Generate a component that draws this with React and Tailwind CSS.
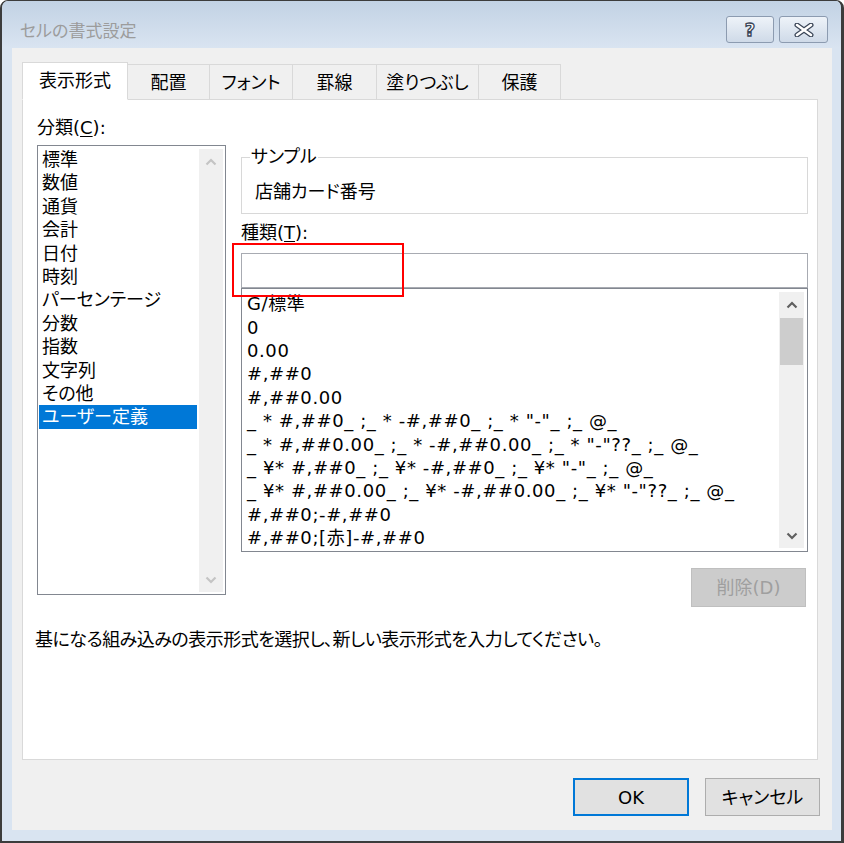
import React from "react";

const F = "font-['DejaVu_Sans','Noto_Sans_CJK_JP',sans-serif] [font-feature-settings:'palt']";

function Up({ color = "#606060" }) {
  return (
    <svg width="12" height="8" viewBox="0 0 12 8">
      <polyline points="1.5,6.5 6,2 10.5,6.5" fill="none" stroke={color} strokeWidth="2.2" />
    </svg>
  );
}
function Down({ color = "#606060" }) {
  return (
    <svg width="12" height="8" viewBox="0 0 12 8">
      <polyline points="1.5,1.5 6,6 10.5,1.5" fill="none" stroke={color} strokeWidth="2.2" />
    </svg>
  );
}

const categories = [
  "標準",
  "数値",
  "通貨",
  "会計",
  "日付",
  "時刻",
  "パーセンテージ",
  "分数",
  "指数",
  "文字列",
  "その他",
  "ユーザー定義",
];

const formats = [
  "G/標準",
  "0",
  "0.00",
  "#,##0",
  "#,##0.00",
  '_ * #,##0_ ;_ * -#,##0_ ;_ * "-"_ ;_ @_',
  '_ * #,##0.00_ ;_ * -#,##0.00_ ;_ * "-"??_ ;_ @_',
  '_ ¥* #,##0_ ;_ ¥* -#,##0_ ;_ ¥* "-"_ ;_ @_',
  '_ ¥* #,##0.00_ ;_ ¥* -#,##0.00_ ;_ ¥* "-"??_ ;_ @_',
  "#,##0;-#,##0",
  "#,##0;[赤]-#,##0",
];

const tabs = [
  { label: "配置", w: "w-[82px]" },
  { label: "フォント", w: "w-[83px]" },
  { label: "罫線", w: "w-[84px]" },
  { label: "塗りつぶし", w: "w-[102px]" },
  { label: "保護", w: "w-[82px]" },
];

export default function App() {
  return (
    <div className={`w-[844px] h-[843px] bg-white text-black text-[18px] ${F}`}>
      <div className="w-[844px] h-[843px] flex flex-col border-l-2 border-t border-r-[3px] border-b-2 border-[#3c3c3c] rounded-t-[8px] bg-[#d9e4f1] overflow-hidden">
        {/* title bar */}
        <div className="h-[47px] flex items-start pt-[15px] pl-[18px] pr-[13px] bg-linear-to-b from-[#c2d2e4] to-[#d9e4f1]">
          <div className="mt-[3px] leading-[24px] text-[17px] text-[#9c9c9c] whitespace-nowrap">セルの書式設定</div>
          <div className="ml-auto flex gap-[5px]">
            <div className="w-[48px] h-[27px] rounded-[3px] border border-[#8c9bb0] bg-linear-to-b from-[#eef3f9] to-[#cfdae8] flex items-center justify-center">
              <span className="font-['DejaVu_Sans',sans-serif] font-bold text-[18px] leading-none text-white [-webkit-text-stroke:1.3px_#3b4658]">?</span>
            </div>
            <div className="w-[49px] h-[27px] rounded-[3px] border border-[#8c9bb0] bg-linear-to-b from-[#eef3f9] to-[#cfdae8] flex items-center justify-center">
              <svg width="20" height="14" viewBox="0 0 20 14">
                <path d="M3 2 L17 12 M17 2 L3 12" stroke="#3b4658" strokeWidth="5" strokeLinecap="round" fill="none" />
                <path d="M3 2 L17 12 M17 2 L3 12" stroke="#ffffff" strokeWidth="2.6" strokeLinecap="round" fill="none" />
              </svg>
            </div>
          </div>
        </div>

        {/* client area */}
        <div className="ml-[10px] mr-[9px] h-[782px] bg-[#f0f0f0] flex flex-col pt-[14px] pl-[10px]">
          {/* tabs */}
          <div className="flex items-end h-[37px]">
            <div className="relative z-10 -mb-px h-[38px] w-[106px] bg-white border border-[#d9d9d9] border-b-white flex items-center justify-center pb-[2px]">
              表示形式
            </div>
            {tabs.map((t) => (
              <div
                key={t.label}
                className={`h-[35px] ${t.w} bg-[#f0f0f0] border-t border-r border-[#d9d9d9] flex items-center justify-center`}
              >
                {t.label}
              </div>
            ))}
          </div>

          {/* panel */}
          <div className="w-[796px] h-[661px] bg-white border border-[#d9d9d9] pt-[16px] pl-[12px] flex flex-col">
            <div className="flex">
              {/* left column */}
              <div className="ml-[2px] w-[189px] flex flex-col">
                <div className="h-[24px] leading-[24px]">
                  分類(<span className="underline underline-offset-2">C</span>):
                </div>
                <div className="mt-[5px] h-[450px] border border-[#828790] flex">
                  <div className="flex-1 pt-[2px] pl-px">
                    {categories.map((c) => (
                      <div
                        key={c}
                        className={`h-[23.4px] leading-[23.4px] pl-[3px] whitespace-nowrap ${
                          c === "ユーザー定義" ? "w-[158px] bg-[#0078d7] text-white" : ""
                        }`}
                      >
                        {c}
                      </div>
                    ))}
                  </div>
                  <div className="w-[24px] mt-[3px] mb-[2px] mr-[2px] bg-[#f0f0f0] flex flex-col justify-between">
                    <div className="h-[26px] flex items-center justify-center">
                      <Up color="#c4c4c4" />
                    </div>
                    <div className="h-[24px] flex items-center justify-center">
                      <Down color="#c4c4c4" />
                    </div>
                  </div>
                </div>
              </div>

              {/* right column */}
              <div className="relative ml-[15px] w-[567px] flex flex-col">
                <fieldset className="mt-[30px] border border-[#d8d8d8] pt-[13px] pb-[10px] pl-[13px]">
                  <legend className="ml-[-5px] px-px leading-[22px]">サンプル</legend>
                  <div className="leading-[22px]">店舗カード番号</div>
                </fieldset>
                <div className="mt-[8px] leading-[22px]">
                  種類(<span className="underline underline-offset-2">T</span>):
                </div>
                <div className="mt-[9px] h-[35px] border border-[#a8abb2] bg-white"></div>
                <div className="h-[264px] border border-[#828790] flex">
                  <div className="flex-1 pt-[3.3px] pl-[5px] tracking-[0.6px]">
                    {formats.map((f) => (
                      <div key={f} className="h-[23.4px] leading-[23.4px] whitespace-pre">
                        {f}
                      </div>
                    ))}
                  </div>
                  <div className="w-[25px] my-[3px] mr-[3px] bg-[#f0f0f0] flex flex-col">
                    <div className="h-[26px] flex items-center justify-center">
                      <Up />
                    </div>
                    <div className="h-[47px] mx-px bg-[#cdcdcd]"></div>
                    <div className="mt-auto h-[24px] flex items-center justify-center">
                      <Down />
                    </div>
                  </div>
                </div>
                <div className="mt-[16px] mr-[2px] self-end w-[115px] h-[39px] bg-[#cccccc] border border-[#bfbfbf] flex items-center justify-center text-[#9f9f9f]">
                  削除(D)
                </div>

                {/* red annotation box */}
                <div className="absolute left-[-9px] top-[127px] w-[172px] h-[54px] border-2 border-[#ff0000]"></div>
              </div>
            </div>

            <div className="mt-[21px] leading-[24px] whitespace-nowrap tracking-[-0.5px]">
              基になる組み込みの表示形式を選択し、新しい表示形式を入力してください。
            </div>
          </div>

          {/* buttons */}
          <div className="mt-[18px] flex justify-end gap-[16px] pr-[12px]">
            <div className="w-[116px] h-[38px] bg-[#e1e1e1] border-2 border-[#0078d7] flex items-center justify-center">
              OK
            </div>
            <div className="w-[115px] h-[38px] bg-[#e1e1e1] border border-[#adadad] flex items-center justify-center">
              キャンセル
            </div>
          </div>
        </div>
      </div>
    </div>
  );
}
